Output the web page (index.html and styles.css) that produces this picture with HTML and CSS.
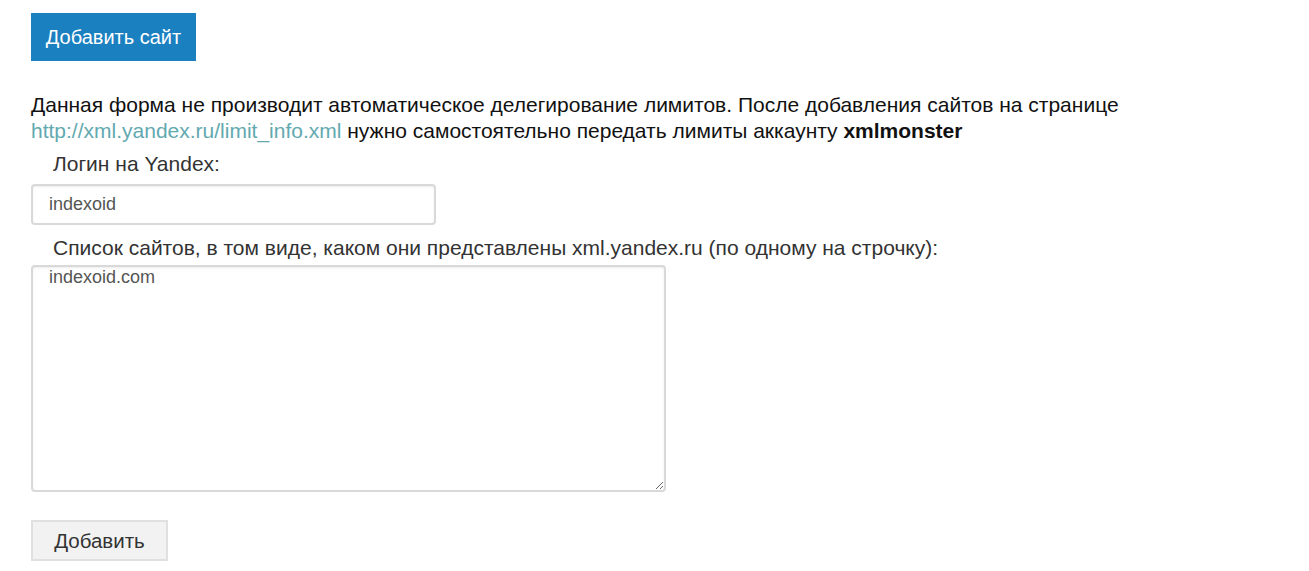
FILE: index.html
```html
<!DOCTYPE html>
<html lang="ru">
<head>
<meta charset="utf-8">
<title>Добавить сайт</title>
<link rel="stylesheet" href="styles.css">
</head>
<body>
<div class="page">
  <button class="btn-primary" type="button">Добавить сайт</button>
  <p class="notice">Данная форма не производит автоматическое делегирование лимитов. После добавления сайтов на странице <a href="#" class="link">http://xml.yandex.ru/limit_info.xml</a> нужно самостоятельно передать лимиты аккаунту <b>xmlmonster</b></p>
  <form class="form">
    <label class="label" for="login">Логин на Yandex:</label>
    <input class="input" id="login" type="text" value="indexoid">
    <label class="label label-sites" for="sites">Список сайтов, в том виде, каком они представлены xml.yandex.ru (по одному на строчку):</label>
    <textarea class="textarea" id="sites">indexoid.com</textarea>
    <button class="btn-default" type="button">Добавить</button>
  </form>
</div>
</body>
</html>
```
FILE: styles.css
```css
html, body {
  margin: 0;
  padding: 0;
  background: #fff;
}
body {
  font-family: "Liberation Sans", Arial, sans-serif;
  font-size: 21px;
  color: #111;
}
.page {
  padding: 13px 0 0 31px;
}
.btn-primary {
  display: block;
  width: 165px;
  height: 48px;
  margin: 0;
  padding: 0;
  border: none;
  background: #1b80c0;
  color: #fff;
  font-family: inherit;
  font-size: 20px;
  cursor: pointer;
}
.notice {
  margin: 31px 0 0;
  line-height: 26px;
  width: 1200px;
}
.link {
  color: #62a9b0;
  text-decoration: none;
}
.notice b {
  font-weight: bold;
}
.form {
  display: flex;
  flex-direction: column;
  align-items: flex-start;
}
.label {
  display: block;
  margin: 7px 0 0 22px;
  line-height: 26px;
  color: #333;
}
.input {
  box-sizing: border-box;
  width: 405px;
  height: 41px;
  margin-top: 7px;
  padding: 0 16px;
  border: 2px solid #d9d9d9;
  border-radius: 4px;
  box-shadow: inset 0 1px 2px rgba(0,0,0,0.08);
  font-family: inherit;
  font-size: 18px;
  color: #555;
  outline: none;
}
.label-sites {
  margin-top: 10px;
}
.textarea {
  box-sizing: border-box;
  width: 635px;
  height: 227px;
  margin-top: 4px;
  padding: 0 16px;
  border: 2px solid #d9d9d9;
  border-radius: 4px;
  box-shadow: inset 0 1px 2px rgba(0,0,0,0.08);
  font-family: inherit;
  font-size: 18px;
  line-height: 20px;
  color: #555;
  outline: none;
}
.btn-default {
  box-sizing: border-box;
  width: 137px;
  height: 41px;
  margin-top: 28px;
  padding: 0;
  border: 2px solid #e0e0e0;
  background: #f2f2f2;
  color: #333;
  font-family: inherit;
  font-size: 20.5px;
  cursor: pointer;
}
```
